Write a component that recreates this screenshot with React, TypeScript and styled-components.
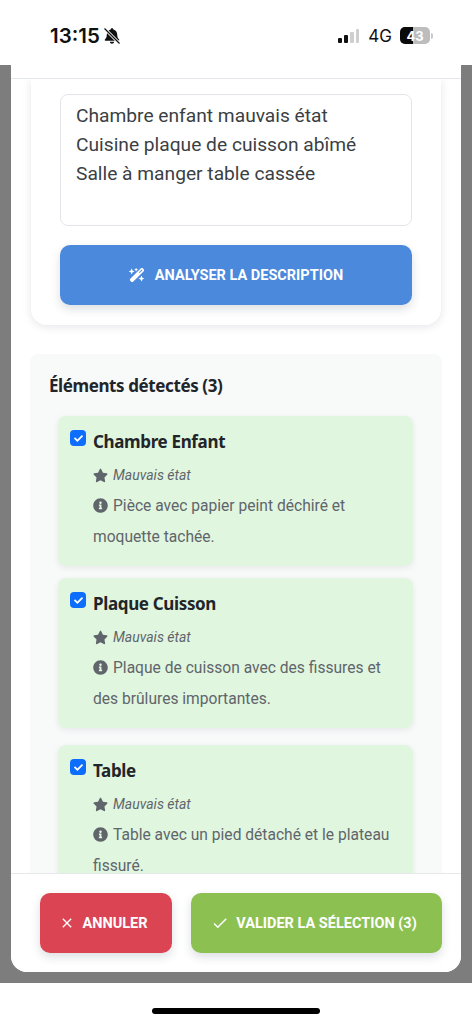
import { createGlobalStyle, styled } from 'styled-components';
import { FaCheck, FaInfoCircle, FaStar } from 'react-icons/fa';
import { FaWandMagicSparkles } from 'react-icons/fa6';
import { MdCheck, MdClose } from 'react-icons/md';

type Detected = {
  name: string;
  condition: string;
  description: string;
  gap: number;
};

const items: Detected[] = [
  {
    name: 'Chambre Enfant',
    condition: 'Mauvais état',
    description: 'Pièce avec papier peint déchiré et moquette tachée.',
    gap: 12,
  },
  {
    name: 'Plaque Cuisson',
    condition: 'Mauvais état',
    description: 'Plaque de cuisson avec des fissures et des brûlures importantes.',
    gap: 17,
  },
  {
    name: 'Table',
    condition: 'Mauvais état',
    description: 'Table avec un pied détaché et le plateau fissuré.',
    gap: 0,
  },
];

const GlobalStyle = createGlobalStyle`
  html, body {
    margin: 0;
    padding: 0;
    background: #fff;
  }

  * {
    box-sizing: border-box;
  }
`;

const Screen = styled.div`
  width: 472px;
  height: 1024px;
  display: flex;
  flex-direction: column;
  overflow: hidden;
  background: #fff;
  font-family: Roboto, 'Liberation Sans', sans-serif;
`;

const StatusBar = styled.div`
  height: 65px;
  flex: none;
  display: flex;
  justify-content: space-between;
  align-items: center;
  padding: 6px 39px 0 50px;
  color: #111;
  font-family: Inter, 'Liberation Sans', sans-serif;
`;

const StatusGroup = styled.div`
  display: flex;
  align-items: center;
`;

const Clock = styled.span`
  font-size: 20.5px;
  font-weight: 600;
  margin-right: 3px;
`;

const Bars = styled.div`
  display: flex;
  align-items: flex-end;
  gap: 2px;
  margin-right: 9px;
`;

const Bar = styled.span<{ $height: number; $on: boolean }>`
  width: 3.75px;
  height: ${(p) => p.$height}px;
  border-radius: 1px;
  background: ${(p) => (p.$on ? '#111' : '#cfcfcf')};
`;

const Network = styled.span`
  font-size: 17px;
  font-weight: 400;
  margin-right: 8px;
`;

const Battery = styled.div`
  position: relative;
  width: 30px;
  height: 17px;
  border-radius: 5px;
  overflow: hidden;
  background: #bdbdbd;
  display: flex;
  align-items: center;
  justify-content: center;
  color: #fff;
  font-size: 13px;
  font-weight: 700;

  &::before {
    content: '';
    position: absolute;
    left: 0;
    top: 0;
    bottom: 0;
    width: 13px;
    background: #0a0a0a;
  }

  span {
    position: relative;
  }
`;

const BatteryTip = styled.span`
  width: 2px;
  height: 6px;
  margin-left: 1px;
  border-radius: 0 2px 2px 0;
  background: #c9c9c9;
`;

const Backdrop = styled.div`
  height: 918px;
  flex: none;
  padding: 0 11px 11px;
  background: #7d7d7d;
`;

const Modal = styled.div`
  height: 100%;
  display: flex;
  flex-direction: column;
  overflow: hidden;
  background: #fff;
  border-radius: 0 0 16px 16px;
`;

const ModalTop = styled.div`
  height: 14px;
  flex: none;
  border-bottom: 1px solid #e3e7ec;
`;

const ModalBody = styled.div`
  flex: 1;
  min-height: 0;
  overflow: hidden;
  padding: 0 19px;
`;

const Card = styled.div`
  margin: 0 1px 29px;
  padding: 15px 29px 20px;
  background: #fff;
  border-radius: 0 0 16px 16px;
  box-shadow: 0 2px 8px rgba(40, 50, 70, 0.12);
`;

const Description = styled.div`
  height: 132px;
  padding: 6px 15px;
  border: 1px solid #e2e5e9;
  border-radius: 8px;
  color: #3b3f44;
  font-size: 19.2px;
  line-height: 29px;
  white-space: pre-line;
`;

const ActionButton = styled.button<{ $color: string; $grow?: boolean }>`
  height: 60px;
  border: 0;
  border-radius: 10px;
  flex: ${(p) => (p.$grow ? 1 : 'none')};
  display: flex;
  align-items: center;
  justify-content: center;
  gap: 7px;
  padding: 0 5px 0 0;
  color: #fff;
  background: ${(p) => p.$color};
  box-shadow: 0 4px 10px rgba(40, 50, 70, 0.16);
  font-family: Roboto, 'Liberation Sans', sans-serif;
  font-size: 14.5px;
  font-weight: 700;
  text-transform: uppercase;
`;

const AnalyzeButton = styled(ActionButton)`
  width: 100%;
  margin-top: 19px;
  padding: 0;
  gap: 10px;
`;

const Section = styled.section`
  padding: 20px 29px 0 28px;
  background: #f8f9f9;
  border-radius: 8px 8px 0 0;
`;

const SectionTitle = styled.h3`
  margin: 0 0 18px -9px;
  color: #212529;
  font-family: 'Noto Sans', 'Liberation Sans', sans-serif;
  font-size: 17px;
  font-weight: 700;
  line-height: 24px;
  letter-spacing: -0.4px;
`;

const Item = styled.div<{ $gap: number }>`
  height: 150px;
  margin-bottom: ${(p) => p.$gap}px;
  padding: 12px 12px 0;
  background: #e1f6df;
  border-radius: 8px;
  box-shadow: 0 2px 6px rgba(40, 50, 70, 0.08);
`;

const ItemHead = styled.label`
  display: flex;
  align-items: center;
  gap: 7px;
  height: 26px;
  margin-bottom: 10px;
`;

const CheckBox = styled.span`
  width: 16px;
  height: 16px;
  margin-top: -6px;
  display: flex;
  align-items: center;
  justify-content: center;
  flex: none;
  color: #fff;
  background: #0d6efd;
  border-radius: 4px;
`;

const ItemName = styled.span`
  color: #212529;
  font-family: 'Noto Sans', 'Liberation Sans', sans-serif;
  font-size: 17px;
  font-weight: 700;
  letter-spacing: -0.35px;
`;

const ItemDetails = styled.div`
  padding-left: 23px;
  color: #5f656b;
`;

const Condition = styled.div`
  display: flex;
  align-items: center;
  gap: 5px;
  height: 22px;
  margin-bottom: 5px;
  font-size: 14px;
  font-style: italic;
`;

const Note = styled.div`
  font-size: 15.6px;
  line-height: 31px;

  svg {
    vertical-align: -2px;
    margin-right: 5px;
  }
`;

const ModalFooter = styled.div`
  height: 99px;
  flex: none;
  display: flex;
  gap: 19px;
  padding: 19px 19px 19px 29px;
  background: #fff;
  border-top: 1px solid #e6e8eb;
`;

const CancelButton = styled(ActionButton)`
  width: 132px;
`;

const HomeArea = styled.div`
  flex: 1;
  display: flex;
  justify-content: center;
  padding-top: 25px;
`;

const HomeIndicator = styled.div`
  width: 168px;
  height: 6px;
  border-radius: 3px;
  background: #000;
`;

function BellOff() {
  return (
    <svg width="18" height="18" viewBox="0 0 18 18" aria-hidden="true">
      <path
        fill="#111"
        d="M9 1.2c.8 0 1.3.5 1.4 1.2 2.4.6 3.7 2.6 3.8 5 .1 2.5.6 3.8 1.9 5.1.5.5.2 1.2-.5 1.2H2.4c-.7 0-1-.7-.5-1.2 1.3-1.3 1.8-2.6 1.9-5.1.1-2.4 1.4-4.4 3.8-5 .1-.7.6-1.2 1.4-1.2ZM6.8 14.8h4.4C11 16 10.1 16.8 9 16.8S7 16 6.8 14.8Z"
      />
      <path stroke="#fff" strokeWidth="3" d="M1.5 1.500 16.5 16.500" />
      <path stroke="#111" strokeWidth="1.3" d="M1.5 1.500 16.5 16.500" />
    </svg>
  );
}

function App() {
  return (
    <Screen>
      <GlobalStyle />
      <StatusBar>
        <StatusGroup>
          <Clock>13:15</Clock>
          <BellOff />
        </StatusGroup>
        <StatusGroup>
          <Bars>
            <Bar $height={5} $on />
            <Bar $height={8} $on />
            <Bar $height={11} $on={false} />
            <Bar $height={14} $on={false} />
          </Bars>
          <Network>4G</Network>
          <Battery>
            <span>43</span>
          </Battery>
          <BatteryTip />
        </StatusGroup>
      </StatusBar>

      <Backdrop>
        <Modal>
          <ModalTop />
          <ModalBody>
            <Card>
              <Description>
                {'Chambre enfant mauvais état\nCuisine plaque de cuisson abîmé\nSalle à manger table cassée'}
              </Description>
              <AnalyzeButton $color="#4a89dc">
                <FaWandMagicSparkles size={16} />
                Analyser la description
              </AnalyzeButton>
            </Card>

            <Section>
              <SectionTitle>Éléments détectés ({items.length})</SectionTitle>
              {items.map((item) => (
                <Item key={item.name} $gap={item.gap}>
                  <ItemHead>
                    <CheckBox>
                      <FaCheck size={9} />
                    </CheckBox>
                    <ItemName>{item.name}</ItemName>
                  </ItemHead>
                  <ItemDetails>
                    <Condition>
                      <FaStar size={15} />
                      {item.condition}
                    </Condition>
                    <Note>
                      <FaInfoCircle size={15} />
                      {item.description}
                    </Note>
                  </ItemDetails>
                </Item>
              ))}
            </Section>
          </ModalBody>
          <ModalFooter>
            <CancelButton $color="#da4453">
              <MdClose size={16} />
              Annuler
            </CancelButton>
            <ActionButton $color="#8cc152" $grow>
              <MdCheck size={18} />
              Valider la sélection (3)
            </ActionButton>
          </ModalFooter>
        </Modal>
      </Backdrop>

      <HomeArea>
        <HomeIndicator />
      </HomeArea>
    </Screen>
  );
}

export default App;
